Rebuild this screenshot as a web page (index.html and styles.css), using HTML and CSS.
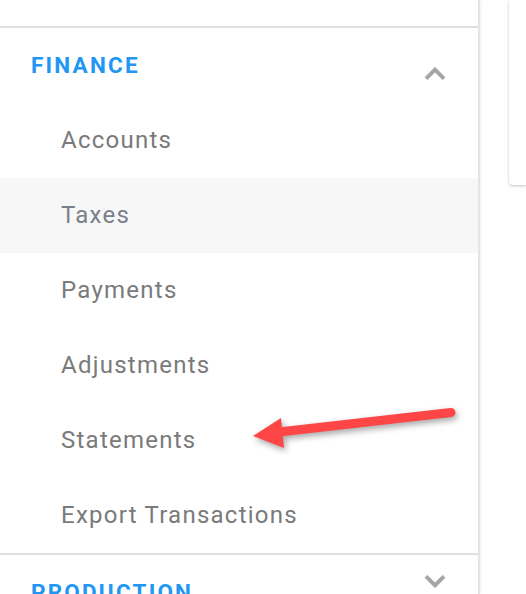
FILE: index.html
```html
<!DOCTYPE html>
<html>
<head>
<meta charset="utf-8">
<link rel="stylesheet" href="styles.css">
</head>
<body>
<div class="page">
  <nav class="sidebar">
    <div class="prev-section"></div>
    <section class="group">
      <div class="group-head">
        <span class="group-title">FINANCE</span>
        <svg class="chev" viewBox="0 0 24 24" width="40" height="40"><path d="M12 8l-6 6 1.41 1.41L12 10.83l4.59 4.58L18 14z"/></svg>
      </div>
      <a class="item">Accounts</a>
      <a class="item active">Taxes</a>
      <a class="item">Payments</a>
      <a class="item">Adjustments</a>
      <a class="item">Statements</a>
      <a class="item">Export Transactions</a>
    </section>
    <section class="group">
      <div class="group-head">
        <span class="group-title">PRODUCTION</span>
        <svg class="chev down" viewBox="0 0 24 24" width="40" height="40"><path d="M16.59 8.59L12 13.17 7.41 8.59 6 10l6 6 6-6z"/></svg>
      </div>
    </section>
  </nav>
  <div class="content">
    <div class="card"></div>
  </div>
  <svg class="arrow" width="526" height="594" viewBox="0 0 526 594">
    <g class="arrow-shape">
      <line x1="279" y1="432" x2="451" y2="412.5" stroke="#ff4646" stroke-width="9" stroke-linecap="round"/>
      <polygon points="253,436 281,418 284,448" fill="#ff4646"/>
    </g>
  </svg>
</div>
</body>
</html>
```

FILE: styles.css
```css
html, body {
  margin: 0;
  padding: 0;
  background: #fff;
  font-family: Roboto, "Liberation Sans", sans-serif;
}
.page {
  display: flex;
  height: 594px;
  overflow: hidden;
  position: relative;
}
.sidebar {
  width: 478px;
  flex: none;
  border-right: 2px solid #e4e4e4;
  box-shadow: 1px 0 3px rgba(0,0,0,0.06);
}
.prev-section {
  height: 26px;
  border-bottom: 2px solid #e0e0e0;
}
.group {
  border-bottom: 2px solid #e0e0e0;
}
.group-head {
  height: 75px;
  position: relative;
  padding: 24px 0 0 31px;
  box-sizing: border-box;
}
.group-title {
  display: block;
  font-size: 22.5px;
  line-height: 26px;
  font-weight: 700;
  color: #2196f3;
  letter-spacing: 2.2px;
}
.chev {
  position: absolute;
  left: 415px;
  top: 26px;
  fill: #a5a5a5;
  stroke: #a5a5a5;
  stroke-width: 0.45;
}
.group:last-child .chev {
  top: 6px;
}
.item {
  display: block;
  height: 75px;
  line-height: 75px;
  padding-left: 61px;
  font-size: 24px;
  color: #7a7a7a;
  letter-spacing: 1.25px;
}
.item.active {
  background: #f7f7f7;
  color: #7b7f8a;
}
.content {
  flex: 1;
  padding-left: 29px;
}
.card {
  height: 185px;
  background: #fff;
  border-bottom-left-radius: 4px;
  box-shadow: 0 1px 3px rgba(0,0,0,0.25);
}
.arrow {
  position: absolute;
  left: 0;
  top: 0;
  pointer-events: none;
}
.arrow-shape {
  filter: drop-shadow(2px 3px 3px rgba(0,0,0,0.35));
}
```
